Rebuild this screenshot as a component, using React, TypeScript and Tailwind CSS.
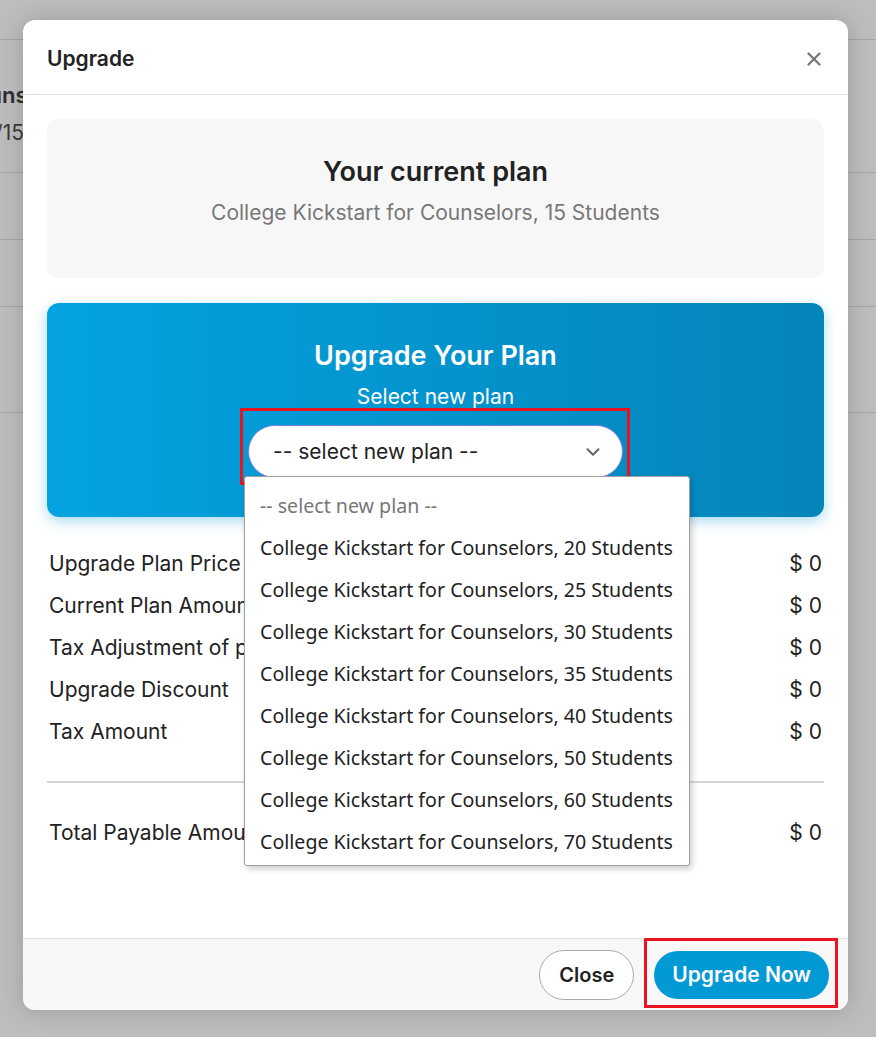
import React from 'react';
import { X, ChevronDown } from 'lucide-react';

const plans = [20, 25, 30, 35, 40, 50, 60, 70];

const rows = [
  'Upgrade Plan Price',
  'Current Plan Amount',
  'Tax Adjustment of previous plan',
  'Upgrade Discount',
  'Tax Amount',
];

const App: React.FC = () => {
  return (
    <div className="relative h-[1037px] w-full overflow-hidden bg-[#bdbdbd] font-['Inter',sans-serif] text-[#222]">
      {/* Page behind the backdrop */}
      <div className="flex flex-col">
        <div className="h-[40px] border-b border-[#a5a5a5]" />
        <div className="flex h-[133px] flex-col gap-[16px] border-b border-[#a5a5a5] pt-[44px]">
          <span className="ml-[-41px] whitespace-nowrap text-[22px] font-semibold leading-none text-[#2e2e2e]">Counselors</span>
          <span className="ml-[-22px] whitespace-nowrap text-[21px] leading-none text-[#3a3a3a]">11/15</span>
        </div>
        <div className="h-[67px] border-b border-[#a5a5a5]" />
        <div className="h-[67px] border-b border-[#a5a5a5]" />
        <div className="h-[106px] border-b border-[#a5a5a5]" />
      </div>

      {/* Modal */}
      <div className="absolute left-[23px] top-[20px] flex h-[990px] w-[825px] flex-col overflow-hidden rounded-[12px] bg-white shadow-[0_0_24px_rgba(0,0,0,0.18)]">
        {/* Header */}
        <div className="flex h-[75px] items-center justify-between border-b border-[#e2e2e2] px-[24px] pt-[3px]">
          <h2 className="text-[21px] font-semibold text-[#222]">Upgrade</h2>
          <button className="mr-[-1px] text-[#777]">
            <X className="h-[22px] w-[22px]" strokeWidth={2.5} />
          </button>
        </div>

        {/* Body */}
        <div className="relative flex-1 px-[24px] pt-[24px]">
          <div className="flex h-[159px] flex-col items-center rounded-[12px] bg-[#f7f7f7] pt-[36px]">
            <h3 className="text-[27px] font-semibold leading-[34px] text-[#222]">Your current plan</h3>
            <p className="mt-[10px] text-[21px] leading-[28px] text-[#777]">College Kickstart for Counselors, 15 Students</p>
          </div>

          <div className="mt-[25px] flex h-[214px] flex-col items-center rounded-[12px] bg-gradient-to-r from-[#04a3e1] to-[#0485ba] pt-[36px] shadow-[0_4px_14px_rgba(4,150,210,0.35)]">
            <h3 className="text-[27px] font-semibold leading-[34px] text-white">Upgrade Your Plan</h3>
            <p className="mt-[10px] text-[21px] leading-[28px] text-white">Select new plan</p>
            <div className="relative mt-[14px]">
              <div className="flex h-[53px] w-[375px] items-center justify-between rounded-full border border-[#7a7ee0] bg-white pl-[24px] pr-[18px]">
                <span className="text-[21px] text-[#222]">-- select new plan --</span>
                <ChevronDown className="h-[22px] w-[22px] text-[#666]" strokeWidth={2.2} />
              </div>
              <div className="pointer-events-none absolute left-[-8px] top-[-17px] h-[77px] w-[390px] border-[3px] border-[#e8141f]" />
            </div>
          </div>

          {/* Price rows */}
          <div className="mt-[35px] flex flex-col gap-[18px] px-[2px]">
            {rows.map((r) => (
              <div key={r} className="flex items-center justify-between text-[21px] leading-[24px]">
                <span>{r}</span>
                <span>$ 0</span>
              </div>
            ))}
          </div>
          <div className="mt-[37px] h-[2px] bg-[#d6d6d6]" />
          <div className="mt-[38px] flex items-center justify-between px-[2px] text-[21px] leading-[24px]">
            <span>Total Payable Amount</span>
            <span>$ 0</span>
          </div>

          {/* Open select list */}
          <div className="absolute left-[221px] top-[381px] flex w-[446px] flex-col rounded-[3px] border border-[#a0a0a0] bg-white pb-[2px] pt-[8px] font-['Noto_Sans',sans-serif] shadow-[2px_3px_6px_rgba(0,0,0,0.2)]">
            <div className="flex h-[42px] items-center whitespace-nowrap px-[15px] text-[19.6px] text-[#777]">-- select new plan --</div>
            {plans.map((p) => (
              <div key={p} className="flex h-[42px] items-center whitespace-nowrap px-[15px] text-[19.6px] text-[#222]">
                College Kickstart for Counselors, {p} Students
              </div>
            ))}
          </div>
        </div>

        {/* Footer */}
        <div className="flex h-[72px] items-center justify-end gap-[20px] border-t border-[#e2e2e2] bg-[#f8f8f8] px-[19px]">
          <button className="h-[50px] rounded-full border border-[#aaa] bg-white px-[19px] text-[20px] font-semibold text-[#222]">
            Close
          </button>
          <div className="relative">
            <button className="h-[48px] rounded-full bg-[#0399d4] px-[18px] text-[21px] font-semibold text-white">
              Upgrade Now
            </button>
            <div className="pointer-events-none absolute left-[-10px] top-[-13px] h-[70px] w-[194px] border-[3px] border-[#e8141f]" />
          </div>
        </div>
      </div>
    </div>
  );
};

export default App;
